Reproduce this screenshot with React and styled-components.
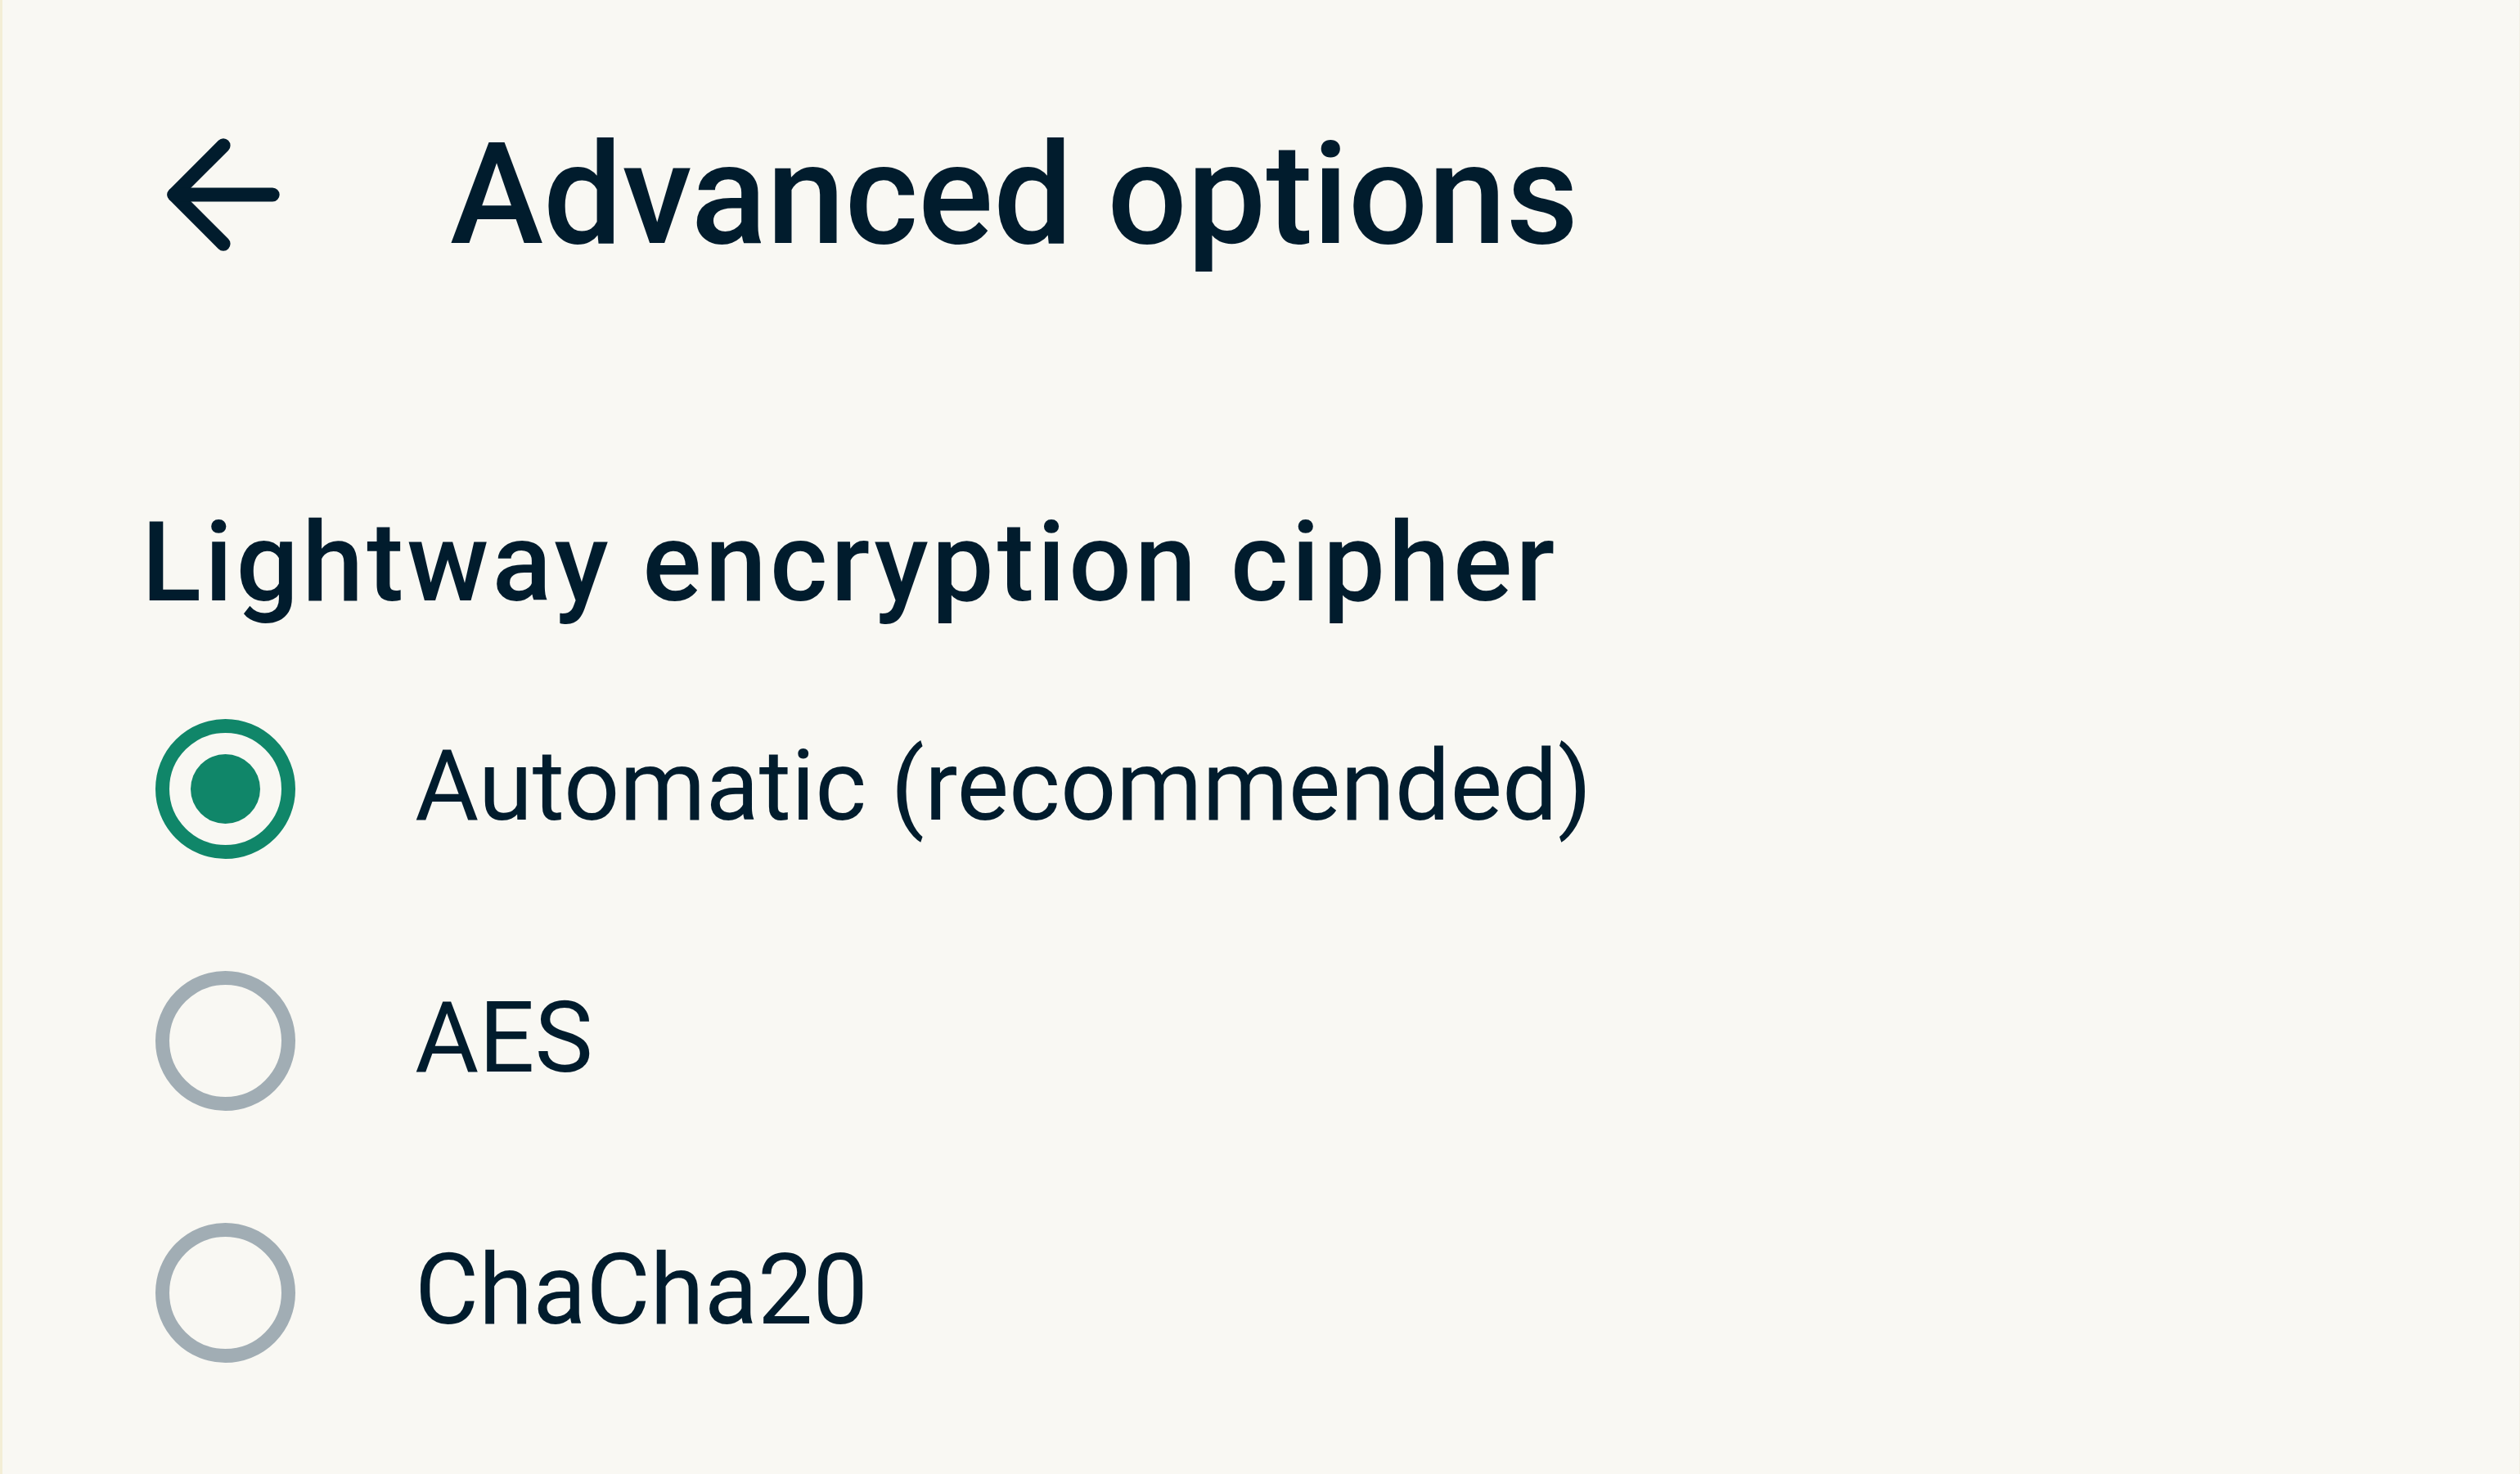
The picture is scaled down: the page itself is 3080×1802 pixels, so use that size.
import React, { useState } from 'react'
import styled, { createGlobalStyle } from 'styled-components'
import { ArrowLeft } from 'lucide-react'


const GlobalStyle = createGlobalStyle`
  html, body {
    margin: 0;
    padding: 0;
    background: #f9f8f3;
  }

  body {
    font-family: Roboto, "Noto Sans", sans-serif;
    color: #011c2d;
  }
`

const Page = styled.main`
  min-height: 100vh;
  box-sizing: border-box;
  padding: 135px 0 0 169px;
  border-left: 3px solid #f3eed6;
  border-right: 1px solid #f2f1e6;
  background: #f9f8f3;
`

const Header = styled.header`
  display: flex;
  align-items: center;
  gap: 174px;
`

const BackButton = styled.button`
  display: flex;
  width: 206px;
  height: 206px;
  margin-left: -2px;
  padding: 0;
  border: none;
  background: none;
  color: #011c2d;
  cursor: pointer;
`

const Title = styled.h1`
  margin: 0;
  font-size: 172px;
  line-height: 1;
  font-weight: 500;
  letter-spacing: -0.2px;
`

const SectionTitle = styled.h2`
  margin: 280px 0 0 1px;
  font-size: 135px;
  line-height: 1;
  font-weight: 500;
  letter-spacing: 4.1px;
`

const Options = styled.div`
  display: flex;
  flex-direction: column;
  gap: 102px;
  margin-top: 105px;
`

const Row = styled.label`
  display: flex;
  align-items: center;
  gap: 129px;
  height: 206px;
  cursor: pointer;
`

const RadioBox = styled.span`
  display: flex;
  align-items: center;
  justify-content: center;
  width: 206px;
  height: 206px;
  flex-shrink: 0;
`

const Ring = styled.span`
  display: flex;
  align-items: center;
  justify-content: center;
  box-sizing: border-box;
  width: 171px;
  height: 171px;
  border-radius: 50%;
  border: 17px solid ${p => (p.$on ? '#108669' : '#a1adb4')};
`

const Dot = styled.span`
  width: 85px;
  height: 85px;
  border-radius: 50%;
  background: #108669;
`

const OptionText = styled.span`
  font-size: 120px;
  line-height: 1;
  font-weight: 400;
  transform: translateY(-3px);
`


const ciphers = ['Automatic (recommended)', 'AES', 'ChaCha20']

const App = () => {
  const [picked, setPicked] = useState(0)

  return (
    <>
      <GlobalStyle />
      <Page>
        <Header>
          <BackButton aria-label="Back">
            <ArrowLeft size={206} strokeWidth={2} />
          </BackButton>
          <Title>Advanced options</Title>
        </Header>

        <SectionTitle>Lightway encryption cipher</SectionTitle>

        <Options>
          {ciphers.map((name, i) => (
            <Row key={name} onClick={() => setPicked(i)}>
              <RadioBox>
                <Ring $on={picked === i}>
                  {picked === i && <Dot />}
                </Ring>
              </RadioBox>
              <OptionText>{name}</OptionText>
            </Row>
          ))}
        </Options>
      </Page>
    </>
  )
}

export default App
